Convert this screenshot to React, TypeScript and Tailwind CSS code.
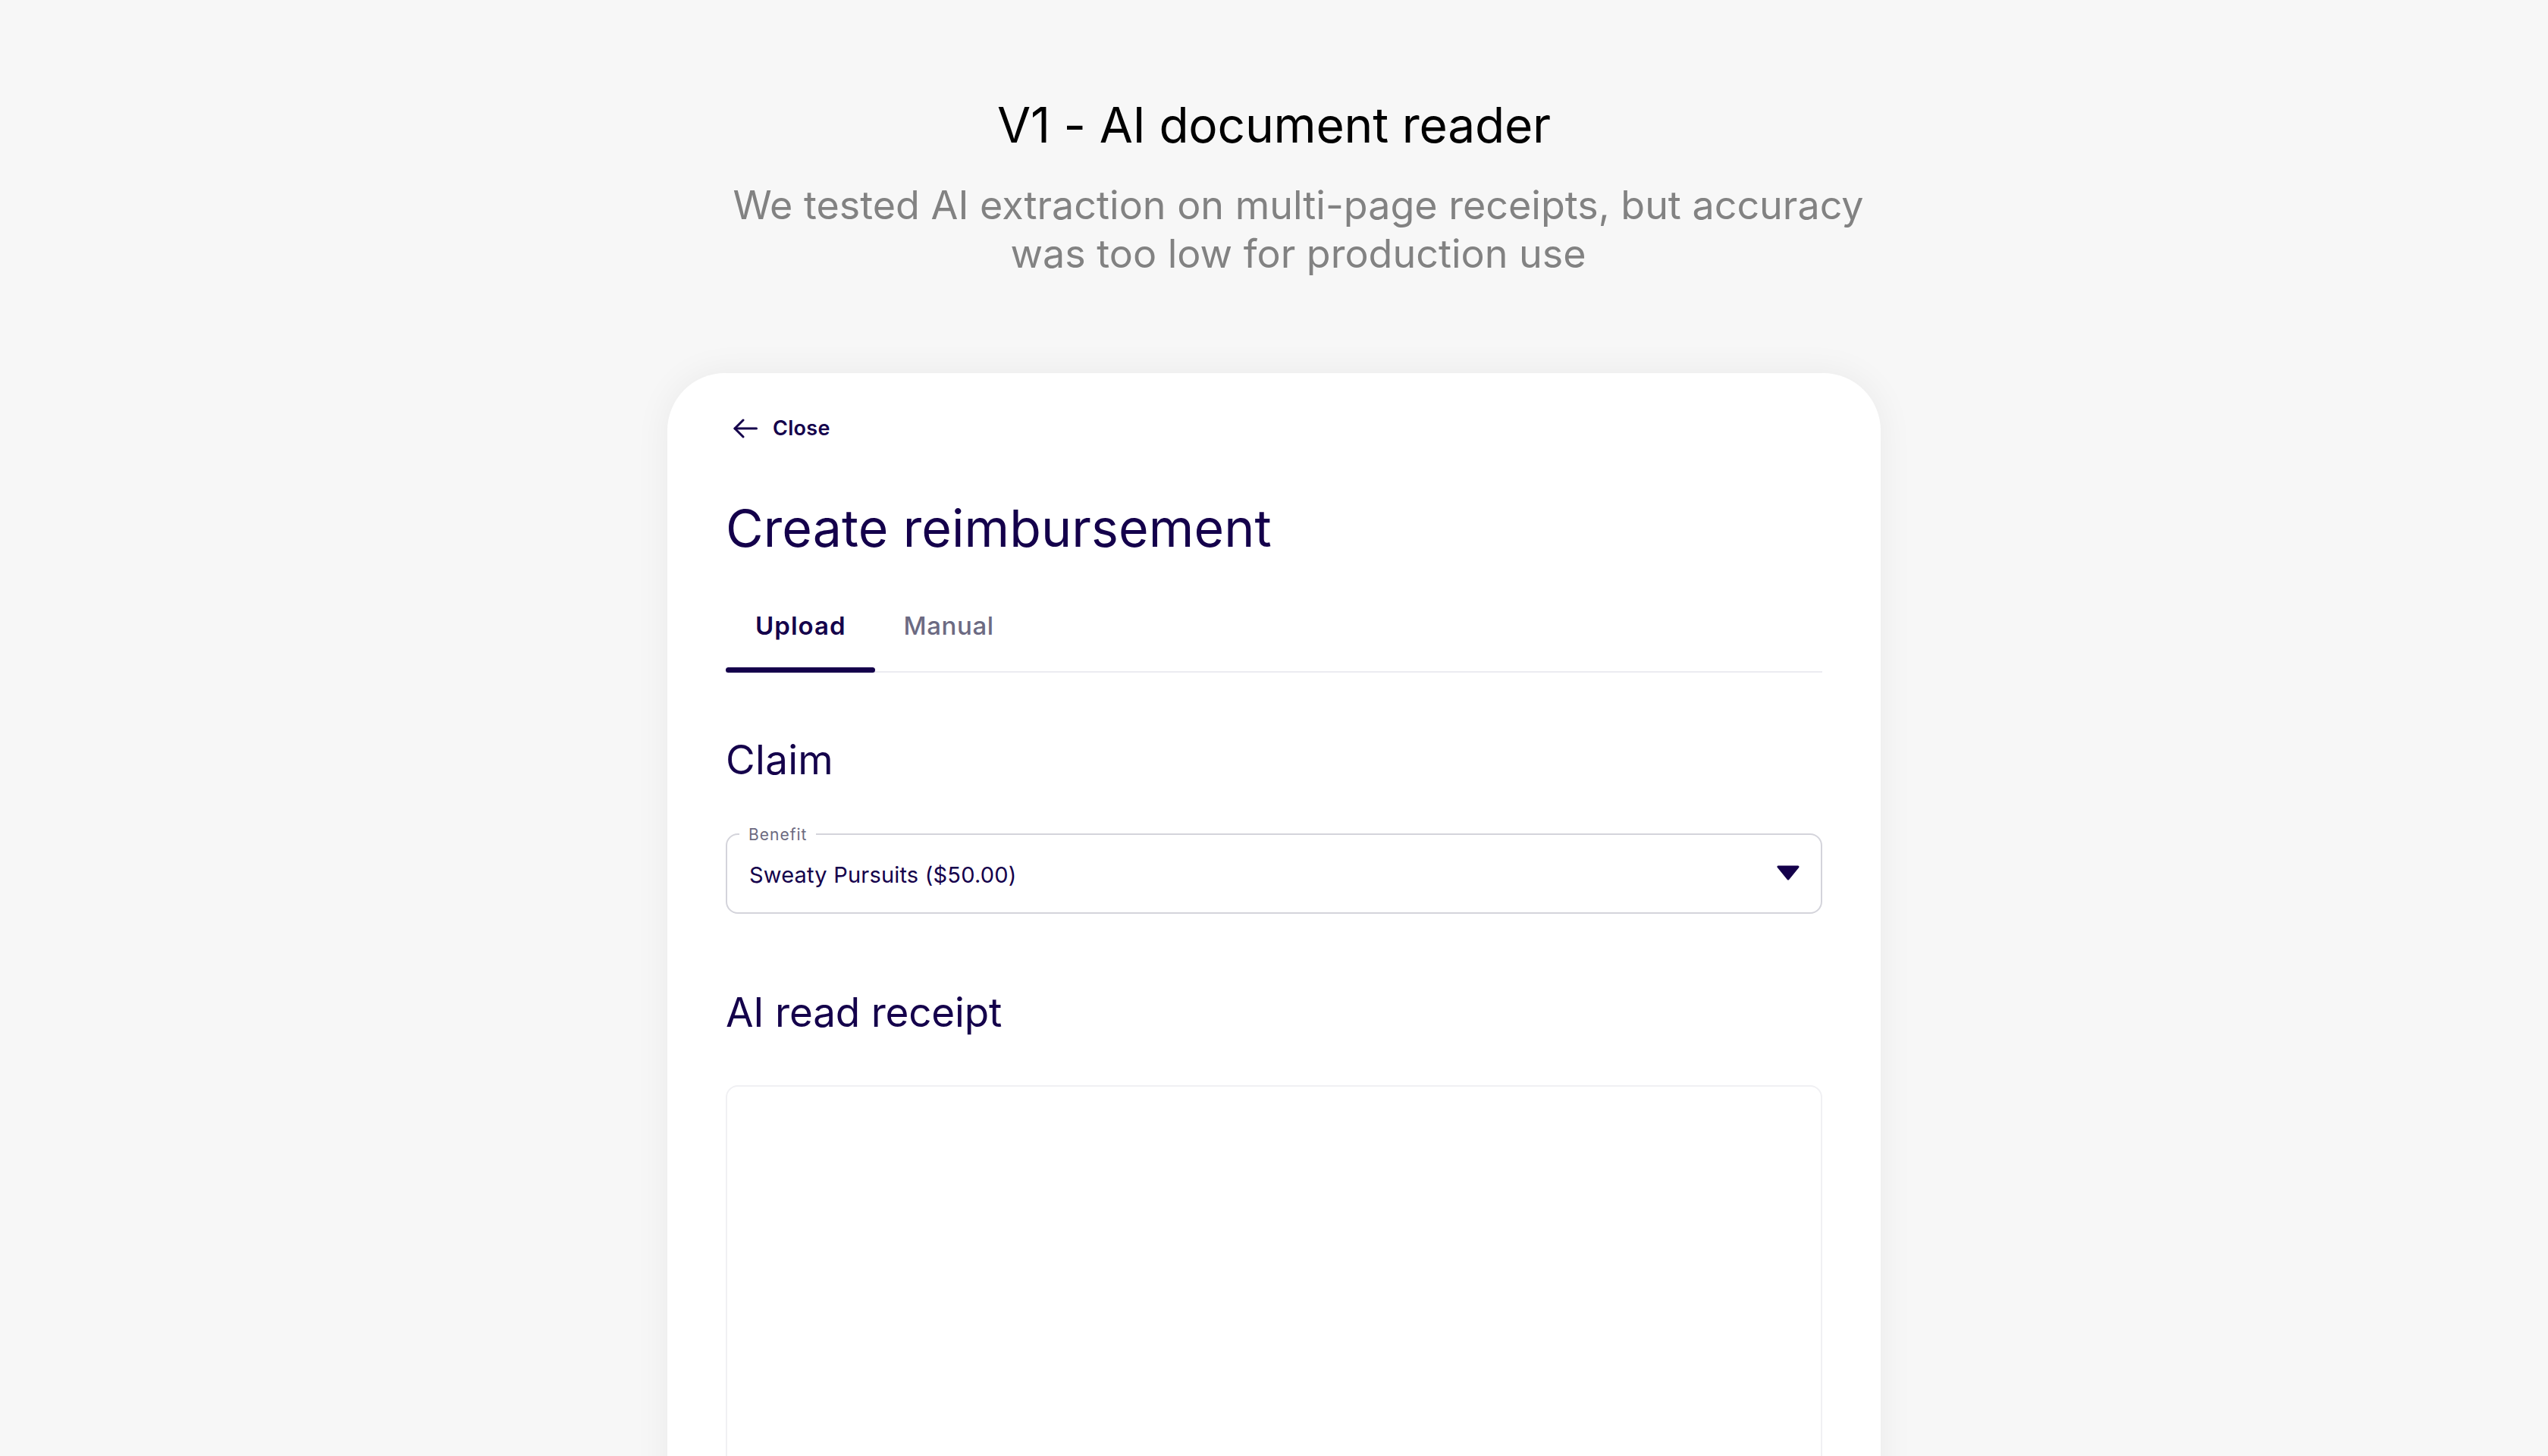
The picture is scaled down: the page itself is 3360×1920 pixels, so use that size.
import React from "react";

export default function App() {
  return (
    <div className="h-[1920px] w-full overflow-hidden bg-[#f7f7f7] flex flex-col items-center font-['Inter',sans-serif]">
      <h1 className="pt-[126px] text-[64px] leading-[77px] font-normal text-black tracking-[-0.2px]">
        V1 - AI document reader
      </h1>
      <p className="mt-[36px] ml-[64px] max-w-[1560px] text-center text-[52px] leading-[64px] text-[#828282]">
        We tested AI extraction on multi-page receipts, but accuracy was too low for production use
      </p>

      <div className="mt-[125px] w-[1600px] h-[1600px] shrink-0 rounded-[76px] bg-white px-[77px] pt-[57px] shadow-[0_0_48px_rgba(0,0,0,0.06)]">
        <button className="flex items-center gap-[20px] pl-[10px] text-[#14004b]">
          <svg width="32" height="26" viewBox="0 0 32 26" fill="none" stroke="currentColor" strokeWidth="3" strokeLinecap="round" strokeLinejoin="round">
            <path d="M30.5 13H2" />
            <path d="M13 2L2 13L13 24" />
          </svg>
          <span className="text-[27px] leading-[32px] font-semibold tracking-[0.3px]">Close</span>
        </button>

        <h2 className="mt-[75px] text-[68px] leading-[80px] font-normal text-[#14004b] tracking-[0.1px]">
          Create reimbursement
        </h2>

        <div className="mt-[34px] flex border-b-2 border-[#ececf1]">
          <div className="flex flex-col items-stretch -mb-[2px]">
            <span className="px-[39px] pt-[35px] pb-[35px] text-[33px] leading-[40px] font-semibold tracking-[1px] text-[#14004b]">
              Upload
            </span>
            <span className="h-[7px] rounded-full bg-[#14004b]" />
          </div>
          <div className="flex flex-col items-stretch -mb-[2px]">
            <span className="px-[37px] pt-[35px] pb-[35px] text-[33px] leading-[40px] font-medium tracking-[0.6px] text-[#6c6a82]">
              Manual
            </span>
            <span className="h-[7px]" />
          </div>
        </div>

        <h3 className="mt-[85px] text-[53px] leading-[60px] font-normal text-[#14004b] tracking-[0.3px]">Claim</h3>

        <div className="relative mt-[67px] h-[106px] rounded-[16px] border-2 border-[#d4d4db] flex items-center justify-between pl-[29px] pr-[27px] pt-[4px]">
          <span className="absolute left-[16px] top-[-10px] bg-white px-[12px] text-[21px] leading-[20px] tracking-[1px] text-[#6c6a80]">
            Benefit
          </span>
          <span className="text-[29px] leading-[34px] text-[#14004b] tracking-[0.2px]">Sweaty Pursuits ($50.00)</span>
          <svg width="32" height="20" viewBox="0 0 32 20" className="-mt-[6px]">
            <path d="M3 2H29L16 18Z" fill="#14004b" stroke="#14004b" strokeWidth="3" strokeLinejoin="round" />
          </svg>
        </div>

        <h3 className="mt-[100px] text-[53px] leading-[60px] font-normal text-[#14004b] tracking-[-0.2px]">AI read receipt</h3>

        <div className="mt-[66px] h-[700px] rounded-[16px] border-2 border-[#f0f0f3]" />
      </div>
    </div>
  );
}
